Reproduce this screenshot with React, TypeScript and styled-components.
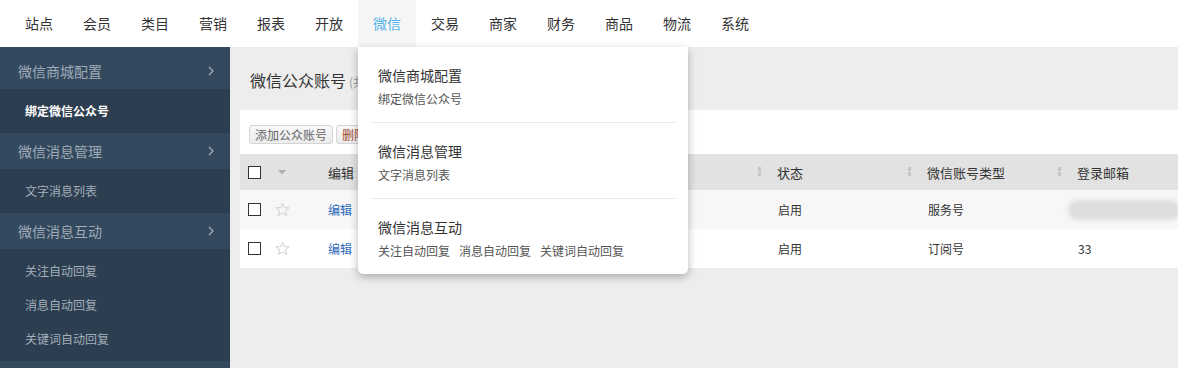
import React from "react";
import styled, { createGlobalStyle } from "styled-components";

const Global = createGlobalStyle`
  html, body { margin: 0; padding: 0; }
  body {
    font-family: "Noto Sans CJK SC", "Liberation Sans", sans-serif;
    background: #ededed;
    color: #333;
  }
  * { box-sizing: border-box; }
`;

const Page = styled.div`
  position: relative;
  width: 1178px;
  height: 368px;
  overflow: hidden;
  background: #ededed;
`;

const TopBar = styled.div`
  height: 47px;
  background: #fff;
  display: flex;
  padding-left: 10px;
`;

const NavItem = styled.div<{ $active?: boolean }>`
  width: 58px;
  padding: 0 15px;
  line-height: 47px;
  font-size: 14px;
  white-space: nowrap;
  color: ${(p) => (p.$active ? "#56b4ea" : "#333")};
  background: ${(p) => (p.$active ? "#f5f5f5" : "transparent")};
`;

const Body = styled.div`
  display: flex;
  height: 321px;
`;

const Sidebar = styled.div`
  width: 230px;
  flex: none;
  background: #34495e;
  padding-top: 6px;
`;

const GroupHead = styled.div`
  height: 36px;
  display: flex;
  align-items: center;
  justify-content: space-between;
  padding: 0 15px 0 18px;
  font-size: 14px;
  color: #9eabb8;
  background: #34495e;
`;

const SubList = styled.div`
  background: #2c3e50;
  padding: 5px 0;
`;

const SubItem = styled.div<{ $active?: boolean }>`
  height: 34px;
  line-height: 34px;
  padding-left: 25px;
  font-size: 12px;
  color: ${(p) => (p.$active ? "#fff" : "#a3afbb")};
  font-weight: ${(p) => (p.$active ? 600 : 400)};
`;

const Main = styled.div`
  flex: 1;
  padding-left: 10px;
  min-width: 0;
`;

const TitleRow = styled.div`
  height: 63px;
  padding: 22px 0 0 10px;
  display: flex;
  align-items: baseline;
  gap: 3px;
`;

const Title = styled.span`
  font-size: 16px;
  line-height: 22px;
  color: #333;
`;

const Count = styled.span`
  font-size: 12px;
  color: #999;
`;

const Panel = styled.div`
  background: #fff;
  width: 1000px;
`;

const Toolbar = styled.div`
  height: 44px;
  padding: 15px 0 0 9px;
  display: flex;
  gap: 3px;
`;

const Btn = styled.div<{ $danger?: boolean }>`
  height: 19px;
  line-height: 17px;
  padding: 0 5px;
  font-size: 12px;
  color: ${(p) => (p.$danger ? "#a24a2f" : "#666")};
  border: 1px solid #d4d4d4;
  border-radius: 3px;
  background: linear-gradient(#f8f8f8, #ececec);
`;

const Row = styled.div<{ $bg: string; $h: number }>`
  display: grid;
  grid-template-columns: 30px 39px repeat(6, 150px);
  height: ${(p) => p.$h}px;
  background: ${(p) => p.$bg};
  align-items: center;
`;

const HeadCell = styled.div<{ $sep?: boolean }>`
  display: flex;
  align-items: center;
  font-size: 13px;
  color: #333;
  padding-left: ${(p) => (p.$sep ? 0 : 19)}px;
  white-space: nowrap;
`;

const Sep = styled.span`
  width: 3px;
  height: 10px;
  margin: 0 16px 0 -1px;
  background: repeating-linear-gradient(#c6c6c6 0 4px, transparent 4px 5px);
`;

const Cell = styled.div<{ $link?: boolean }>`
  font-size: 12px;
  padding-left: 19px;
  color: ${(p) => (p.$link ? "#2e6ab8" : "#333")};
  white-space: nowrap;
  position: relative;
`;

const BoxCell = styled.div`
  padding-left: 8px;
  display: flex;
  align-items: center;
`;

const Check = styled.span`
  width: 13px;
  height: 13px;
  border: 1px solid #333;
  background: #fff;
`;

const IconCell = styled.div<{ $pad?: number }>`
  padding-left: ${(p) => p.$pad ?? 5}px;
  display: flex;
  align-items: center;
`;

const Blur = styled.div`
  width: 112px;
  height: 20px;
  margin-left: -10px;
  border-radius: 10px;
  background: #dedede;
  filter: blur(2px);
`;

const Dropdown = styled.div`
  position: absolute;
  left: 358px;
  top: 47px;
  width: 330px;
  background: #fff;
  border-radius: 0 0 5px 5px;
  box-shadow: 0 3px 8px rgba(0, 0, 0, 0.28);
  padding: 0 12px;
`;

const Section = styled.div`
  padding: 18px 8px 14px;
  & + & {
    border-top: 1px solid #ebebeb;
  }
`;

const SecTitle = styled.div`
  font-size: 14px;
  line-height: 20px;
  color: #333;
`;

const SecLinks = styled.div`
  margin-top: 5px;
  display: flex;
  gap: 9px;
  font-size: 12px;
  line-height: 18px;
  color: #555;
`;

const Chevron = () => (
  <svg width="8" height="10" viewBox="0 0 8 10">
    <polyline points="2,1 6,5 2,9" fill="none" stroke="#9eabb8" strokeWidth="1.3" />
  </svg>
);

const Star = () => (
  <svg width="15" height="15" viewBox="0 0 24 24">
    <polygon
      points="12,2 15,9 22.5,9.3 16.7,14 18.7,21.5 12,17.3 5.3,21.5 7.3,14 1.5,9.3 9,9"
      fill="none"
      stroke="#cfcfcf"
      strokeWidth="1.6"
      strokeLinejoin="round"
    />
  </svg>
);

const Caret = () => (
  <svg width="8" height="5" viewBox="0 0 8 5">
    <polygon points="0,0 8,0 4,4.5" fill="#b0b0b0" />
  </svg>
);

const navs = ["站点", "会员", "类目", "营销", "报表", "开放", "微信", "交易", "商家", "财务", "商品", "物流", "系统"];

const rows = [
  { bg: "#f7f7f7", status: "启用", type: "服务号", mail: null as string | null },
  { bg: "#fff", status: "启用", type: "订阅号", mail: "33" },
];

export default function App() {
  return (
    <Page>
      <Global />
      <TopBar>
        {navs.map((n) => (
          <NavItem key={n} $active={n === "微信"}>
            {n}
          </NavItem>
        ))}
      </TopBar>
      <Body>
        <Sidebar>
          <GroupHead>
            微信商城配置
            <Chevron />
          </GroupHead>
          <SubList>
            <SubItem $active>绑定微信公众号</SubItem>
          </SubList>
          <GroupHead>
            微信消息管理
            <Chevron />
          </GroupHead>
          <SubList>
            <SubItem>文字消息列表</SubItem>
          </SubList>
          <GroupHead>
            微信消息互动
            <Chevron />
          </GroupHead>
          <SubList>
            <SubItem>关注自动回复</SubItem>
            <SubItem>消息自动回复</SubItem>
            <SubItem>关键词自动回复</SubItem>
          </SubList>
        </Sidebar>
        <Main>
          <TitleRow>
            <Title>微信公众账号</Title>
            <Count>(共</Count>
          </TitleRow>
          <Panel>
            <Toolbar>
              <Btn>添加公众账号</Btn>
              <Btn $danger>删除</Btn>
            </Toolbar>
            <Row $bg="#e2e2e2" $h={36}>
              <BoxCell>
                <Check />
              </BoxCell>
              <IconCell $pad={8}>
                <Caret />
              </IconCell>
              <HeadCell>编辑</HeadCell>
              <HeadCell $sep />
              <HeadCell $sep />
              <HeadCell $sep>
                <Sep />
                状态
              </HeadCell>
              <HeadCell $sep>
                <Sep />
                微信账号类型
              </HeadCell>
              <HeadCell $sep>
                <Sep />
                登录邮箱
              </HeadCell>
            </Row>
            {rows.map((r, i) => (
              <Row key={i} $bg={r.bg} $h={39}>
                <BoxCell>
                  <Check />
                </BoxCell>
                <IconCell>
                  <Star />
                </IconCell>
                <Cell $link>编辑</Cell>
                <Cell />
                <Cell />
                <Cell>{r.status}</Cell>
                <Cell>{r.type}</Cell>
                <Cell>{r.mail ?? <Blur />}</Cell>
              </Row>
            ))}
          </Panel>
        </Main>
      </Body>
      <Dropdown>
        <Section>
          <SecTitle>微信商城配置</SecTitle>
          <SecLinks>
            <span>绑定微信公众号</span>
          </SecLinks>
        </Section>
        <Section>
          <SecTitle>微信消息管理</SecTitle>
          <SecLinks>
            <span>文字消息列表</span>
          </SecLinks>
        </Section>
        <Section>
          <SecTitle>微信消息互动</SecTitle>
          <SecLinks>
            <span>关注自动回复</span>
            <span>消息自动回复</span>
            <span>关键词自动回复</span>
          </SecLinks>
        </Section>
      </Dropdown>
    </Page>
  );
}
